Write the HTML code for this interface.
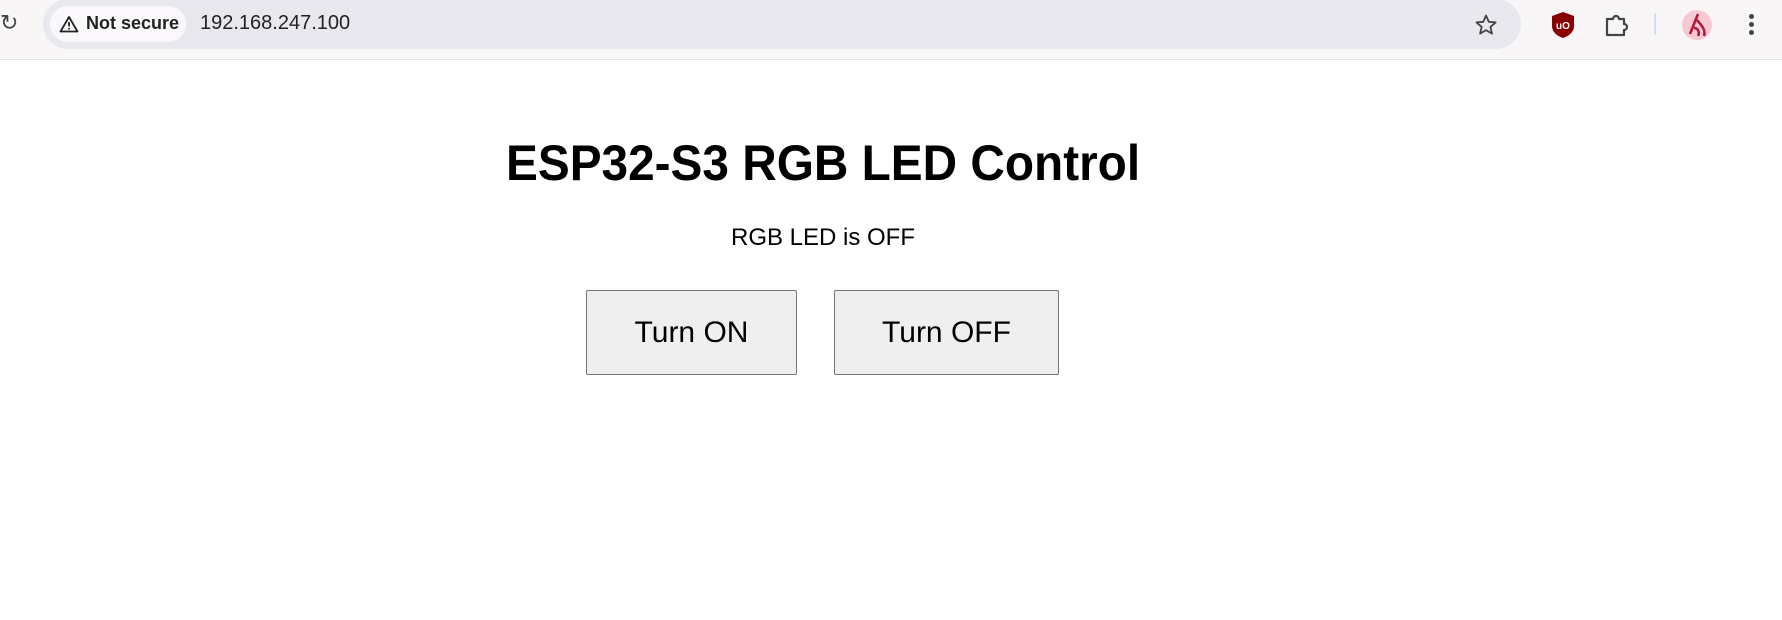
<!DOCTYPE html>
<html><head><meta charset="utf-8"><style>
html,body{margin:0;padding:0;width:1782px;height:620px;overflow:hidden;background:#fff;font-family:"Liberation Sans",Arial,sans-serif;position:relative}
.bar{position:absolute;left:0;top:0;width:1782px;height:59px;background:#f9f6f8;border-bottom:1px solid #e2dfe2}
.omni{position:absolute;left:43px;width:1478px;height:50px;background:#e9e8ee;border-radius:25px;top:-1px}
.chip{position:absolute;left:50px;top:6px;width:136px;height:36px;background:#faf8fa;border-radius:18px}
.t{position:absolute;white-space:nowrap}
.btn{position:absolute;background:#efefef;border:1px solid #767676;border-radius:2px;box-sizing:border-box;font-size:30px;color:#000;display:flex;align-items:center;justify-content:center}
</style></head><body>
<div class="bar"></div>
<div class="omni"></div>
<div class="chip"></div>
<div class="t" style="left:0;top:10px;font-size:22px;color:#444">&#x21bb;</div>
<svg class="t" style="left:59px;top:15px" width="20" height="18" viewBox="0 0 20 18"><path d="M10 2 L18.5 16.5 H1.5 Z" fill="none" stroke="#222" stroke-width="1.8" stroke-linejoin="round"/><path d="M10 7v4.5M10 13v1.5" stroke="#222" stroke-width="1.8"/></svg>
<div class="t" style="left:86px;top:13px;font-size:18px;font-weight:bold;color:#222">Not secure</div>
<div class="t" style="left:200px;top:12px;font-size:20px;color:#222">192.168.247.100</div>
<svg class="t" style="left:1474px;top:13px" width="24" height="24" viewBox="0 0 24 24"><path d="M12 2.5l2.8 6.3 6.8.6-5.2 4.5 1.6 6.7L12 17.1l-5.9 3.5 1.6-6.7-5.2-4.5 6.8-.6z" fill="none" stroke="#444" stroke-width="1.8" stroke-linejoin="round"/></svg>
<svg class="t" style="left:1551px;top:11px" width="24" height="28" viewBox="0 0 24 28"><path d="M12 1L23 5v10c0 6-5 10-11 12C6 25 1 21 1 15V5z" fill="#800"/><text x="12" y="18" font-size="10" font-weight="bold" fill="#fff" text-anchor="middle" font-family="Liberation Sans">uO</text></svg>
<svg class="t" style="left:1604px;top:12px" width="26" height="26" viewBox="0 0 26 26"><path d="M3 7h6a3 3 0 016 0h5v5a3 3 0 010 6v5H3z" fill="none" stroke="#444" stroke-width="2.2" stroke-linejoin="round"/></svg>
<div class="t" style="left:1654px;top:13px;width:2px;height:22px;background:#cfe0fa"></div>
<div class="t" style="left:1682px;top:10px;width:30px;height:30px;border-radius:50%;background:#f7c9d3"></div>
<svg class="t" style="left:1682px;top:10px" width="30" height="30" viewBox="0 0 30 30"><path d="M16 4 L8 24 M15 10 C20 16 24 20 22 26 M12 18 C16 18 18 22 16 26" stroke="#b0163c" stroke-width="2.5" fill="none"/></svg>
<div class="t" style="left:1749px;top:14px;width:5px;height:5px;border-radius:50%;background:#444"></div>
<div class="t" style="left:1749px;top:22px;width:5px;height:5px;border-radius:50%;background:#444"></div>
<div class="t" style="left:1749px;top:30px;width:5px;height:5px;border-radius:50%;background:#444"></div>

<div class="t" style="left:506px;top:134px;width:635px;text-align:center;font-size:50px;font-weight:bold;color:#000;transform:scaleX(0.955);transform-origin:0 0">ESP32-S3 RGB LED Control</div>
<div class="t" style="left:623px;top:224px;width:400px;text-align:center;font-size:24px;color:#000">RGB LED is OFF</div>
<div class="btn" style="left:586px;top:290px;width:211px;height:85px">Turn ON</div>
<div class="btn" style="left:834px;top:290px;width:225px;height:85px">Turn OFF</div>
</body></html>
